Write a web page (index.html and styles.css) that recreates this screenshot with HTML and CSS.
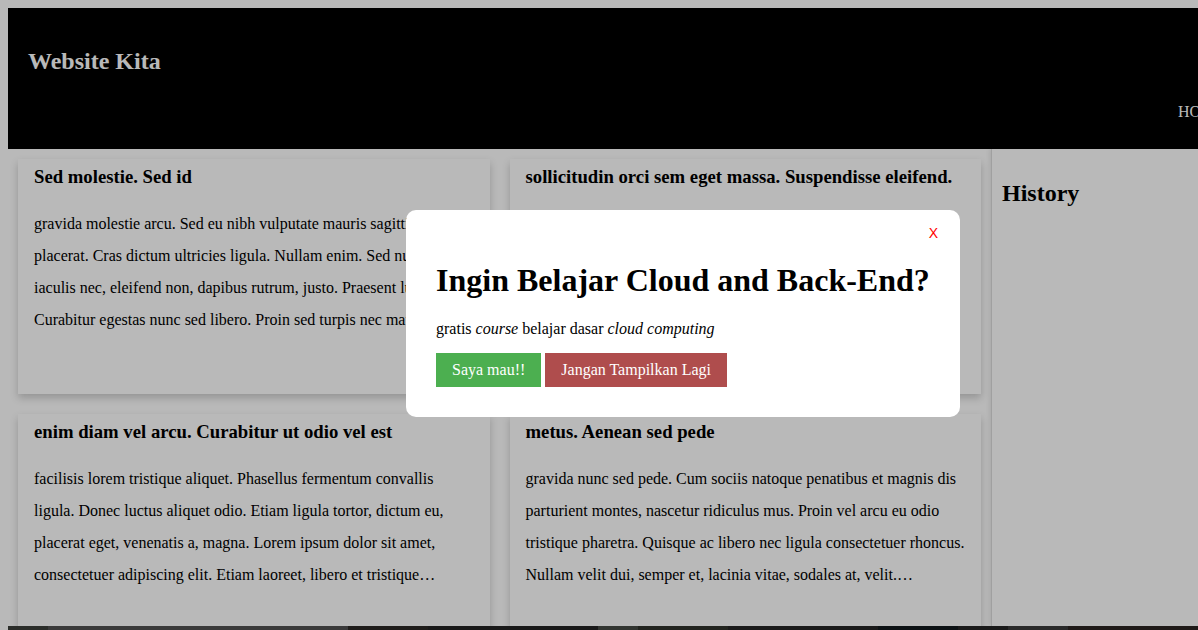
FILE: index.html
```html
<!DOCTYPE html>
<html lang="id">
<head>
<meta charset="utf-8">
<title>Website Kita</title>
<link rel="stylesheet" href="styles.css">
</head>
<body>
<header class="site-header">
  <h2 class="brand">Website Kita</h2>
  <nav class="nav">
    <a class="nav-link" href="#">HOME</a>
    <a class="nav-link" href="#">TENTANG</a>
    <a class="nav-link" href="#">KONTAK</a>
  </nav>
</header>
<main class="main">
  <section class="content">
    <article class="card">
      <h3 class="card-title">Sed molestie. Sed id</h3>
      <p class="card-text">gravida molestie arcu. Sed eu nibh vulputate mauris sagittis placerat. Cras dictum ultricies ligula. Nullam enim. Sed nulla ante, iaculis nec, eleifend non, dapibus rutrum, justo. Praesent luctus. Curabitur egestas nunc sed libero. Proin sed turpis nec mauris…</p>
    </article>
    <article class="card">
      <h3 class="card-title">sollicitudin orci sem eget massa. Suspendisse eleifend.</h3>
      <p class="card-text">Ut nonummy. Fusce id lorem at libero scelerisque tincidunt. Ut aliquet. Quisque ullamcorper, nisl vel mattis luctus, eros lorem imperdiet ligula, ut volutpat urna ante vitae massa. Morbi ornare egestas tellus.…</p>
    </article>
    <article class="card">
      <h3 class="card-title">enim diam vel arcu. Curabitur ut odio vel est</h3>
      <p class="card-text">facilisis lorem tristique aliquet. Phasellus fermentum convallis ligula. Donec luctus aliquet odio. Etiam ligula tortor, dictum eu, placerat eget, venenatis a, magna. Lorem ipsum dolor sit amet, consectetuer adipiscing elit. Etiam laoreet, libero et tristique…</p>
    </article>
    <article class="card">
      <h3 class="card-title">metus. Aenean sed pede</h3>
      <p class="card-text">gravida nunc sed pede. Cum sociis natoque penatibus et magnis dis parturient montes, nascetur ridiculus mus. Proin vel arcu eu odio tristique pharetra. Quisque ac libero nec ligula consectetuer rhoncus. Nullam velit dui, semper et, lacinia vitae, sodales at, velit.…</p>
    </article>
  </section>
  <aside class="sidebar">
    <h2 class="sidebar-title">History</h2>
  </aside>
</main>
<footer class="footer"></footer>

<div class="overlay"></div>
<div class="modal">
  <div class="modal-close">X</div>
  <h1 class="modal-title">Ingin Belajar Cloud and Back-End?</h1>
  <p class="modal-text">gratis <em>course</em> belajar dasar <em>cloud computing</em></p>
  <div class="modal-actions">
    <button class="btn btn-yes">Saya mau!!</button>
    <button class="btn btn-no">Jangan Tampilkan Lagi</button>
  </div>
</div>
</body>
</html>
```
FILE: styles.css
```css
html, body {
  overflow: hidden;
}
body {
  margin: 8px 0 0 8px;
  font-family: "Liberation Serif", "Times New Roman", serif;
  background: #ffffff;
  color: #000;
}

.site-header {
  background: #000;
  color: #fff;
  padding: 20px 20px 21px;
  overflow: hidden;
}
.brand {
  margin: 20px 0;
  font-size: 24px;
  font-weight: bold;
}
.nav {
  padding: 8px 0 8px 1150px;
  line-height: 17px;
  font-size: 16px;
  white-space: nowrap;
}
.nav-link {
  color: #fff;
  text-decoration: none;
  margin-right: 20px;
}

.main {
  display: flex;
  height: 477px;
  overflow: hidden;
}
.content {
  width: 983px;
  flex: none;
  box-sizing: border-box;
  padding: 10px;
  display: grid;
  grid-template-columns: 1fr 1fr;
  grid-auto-rows: 235px;
  gap: 20px;
}
.card {
  background: #fff;
  box-shadow: 0 4px 8px rgba(0,0,0,0.2);
  padding: 7px 16px;
  overflow: hidden;
}
.card-title {
  margin: 0 0 20px;
  font-size: 18.72px;
  font-weight: bold;
}
.card-text {
  margin: 0;
  font-size: 16px;
  line-height: 32px;
}

.sidebar {
  flex: 1;
  border-left: 1px solid #dddddd;
  box-shadow: -2px 0 4px rgba(0,0,0,0.08);
  padding: 10px;
}
.sidebar-title {
  margin: 21px 0;
  font-size: 24px;
}

.footer {
  height: 100px;
  background: linear-gradient(to right,
    #3c3f3a 0 40px, #505050 40px 340px, #2b2826 340px 420px,
    #232323 420px 590px, #464944 590px 630px, #2f322c 630px 720px,
    #242424 720px 870px, #12191c 870px 950px, #242424 950px 1000px,
    #3a3a3a 1000px 1060px, #2c2422 1060px 1198px);
}

.overlay {
  position: fixed;
  inset: 0;
  background: rgba(0,0,0,0.275);
  z-index: 10;
}
.modal {
  position: fixed;
  left: 406px;
  top: 210px;
  width: 554px;
  box-sizing: border-box;
  background: #fff;
  border-radius: 10px;
  padding: 15px 22px 30px 30px;
  z-index: 11;
}
.modal-close {
  text-align: right;
  font-family: "Liberation Sans", Arial, sans-serif;
  font-size: 14px;
  line-height: 16px;
  color: #ff0000;
}
.modal-title {
  margin: 21px 0;
  font-size: 32px;
  font-weight: bold;
}
.modal-text {
  margin: 0 0 15px;
  font-size: 16px;
}
.modal-actions {
  display: flex;
  gap: 4px;
}
.btn {
  border: none;
  color: #fff;
  font-family: "Liberation Serif", "Times New Roman", serif;
  font-size: 16px;
  height: 34px;
  padding: 0 16px;
}
.btn-yes {
  background: #4caf50;
}
.btn-no {
  background: #af4d4d;
}
```
